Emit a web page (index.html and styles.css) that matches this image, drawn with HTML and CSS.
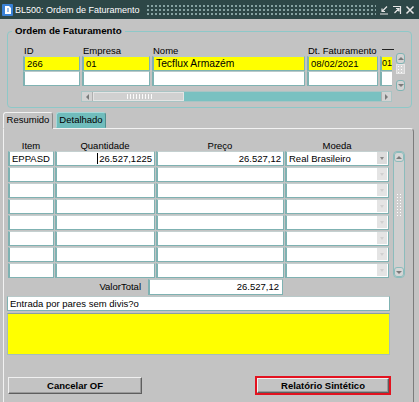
FILE: index.html
```html
<!DOCTYPE html>
<html>
<head>
<meta charset="utf-8">
<link rel="stylesheet" href="styles.css">
</head>
<body>
<div class="window">
  <div class="titlebar">
    <svg class="appicon" width="11" height="12" viewBox="0 0 11 12">
      <rect x="0" y="0" width="11" height="12" rx="1" fill="#3a82d6"/>
      <path d="M3 2 H7 L9 4 V10 H3 Z" fill="#fff"/>
      <path d="M5 5 H7 M5 7 H7" stroke="#3a82d6" stroke-width="1"/>
    </svg>
    <span class="title">BL500: Ordem de Faturamento</span>
    <span class="dots"></span>
    <span class="tb-btns">
      <svg width="10" height="10" viewBox="0 0 10 10"><path d="M8 1.5 L3 6.5 M3 3.5 V6.5 H6 M1 9 H9" stroke="#e6e6e6" stroke-width="1.2" fill="none"/></svg>
      <svg width="10" height="10" viewBox="0 0 10 10"><path d="M1 1.5 H8.5 V9 M2.5 8 L7 3.5 M4 3.5 H7 V6.5" stroke="#e6e6e6" stroke-width="1.2" fill="none"/></svg>
      <svg width="10" height="10" viewBox="0 0 10 10"><path d="M1.5 1.5 L8.5 8.5 M8.5 1.5 L1.5 8.5" stroke="#e6e6e6" stroke-width="1.5" fill="none"/></svg>
    </span>
  </div>
  <div class="body">
    <fieldset class="group">
      <legend>Ordem de Faturamento</legend>
      <div class="ofgrid">
        <div class="lbl">ID</div>
        <div class="lbl">Empresa</div>
        <div class="lbl">Nome</div>
        <div class="lbl">Dt. Faturamento</div>
        <div class="lbl"><span class="dash"></span></div>
        <div class="lbl"></div>

        <div class="fld yellow">266</div>
        <div class="fld yellow">01</div>
        <div class="fld yellow big">Tecflux Armazém</div>
        <div class="fld yellow">08/02/2021</div>
        <div class="fld yellow clip">01</div>
        <div class="vmini">
          <div class="sbtn up"><span class="tri-up"></span></div>
          <div class="sthumb"></div>
          <div class="sspace"></div>
          <div class="sbtn down"><span class="tri-down"></span></div>
        </div>

        <div class="fld"></div>
        <div class="fld"></div>
        <div class="fld"></div>
        <div class="fld"></div>
        <div class="fld clip"></div>

        <div class="hscroll">
          <div class="harrow"><span class="tri-left"></span></div>
          <div class="hthumb"><span class="grip-h"></span></div>
          <div class="htrack"></div>
          <div class="harrow right"><span class="tri-right"></span></div>
        </div>
      </div>
    </fieldset>

    <div class="tabs">
      <div class="tab active">Resumido</div>
      <div class="tab inactive">Detalhado</div>
    </div>

    <div class="panel">
      <div class="gridwrap">
        <div class="table">
          <div class="hdr">Item</div>
          <div class="hdr">Quantidade</div>
          <div class="hdr">Preço</div>
          <div class="hdr">Moeda</div>

          <div class="cell">EPPASD</div>
          <div class="cell num"><span class="caret">26.527,1225</span></div>
          <div class="cell num">26.527,12</div>
          <div class="cell combo"><span class="ctext">Real Brasileiro</span><span class="dd"><span class="tri-down"></span></span></div>

          <div class="cell"></div><div class="cell"></div><div class="cell"></div>
          <div class="cell combo"><span class="ctext"></span><span class="dd faded"><span class="tri-down"></span></span></div>
          <div class="cell"></div><div class="cell"></div><div class="cell"></div>
          <div class="cell combo"><span class="ctext"></span><span class="dd faded"><span class="tri-down"></span></span></div>
          <div class="cell"></div><div class="cell"></div><div class="cell"></div>
          <div class="cell combo"><span class="ctext"></span><span class="dd faded"><span class="tri-down"></span></span></div>
          <div class="cell"></div><div class="cell"></div><div class="cell"></div>
          <div class="cell combo"><span class="ctext"></span><span class="dd faded"><span class="tri-down"></span></span></div>
          <div class="cell"></div><div class="cell"></div><div class="cell"></div>
          <div class="cell combo"><span class="ctext"></span><span class="dd faded"><span class="tri-down"></span></span></div>
          <div class="cell"></div><div class="cell"></div><div class="cell"></div>
          <div class="cell combo"><span class="ctext"></span><span class="dd faded"><span class="tri-down"></span></span></div>
          <div class="cell"></div><div class="cell"></div><div class="cell"></div>
          <div class="cell combo"><span class="ctext"></span><span class="dd faded"><span class="tri-down"></span></span></div>
        </div>
        <div class="vscroll">
          <div class="vbtn"><span class="tri-up"></span></div>
          <div class="vtrack"><span class="grip-v"></span></div>
          <div class="vbtn"><span class="tri-down"></span></div>
        </div>
      </div>

      <div class="totalrow">
        <div class="tlabel">ValorTotal</div>
        <div class="fld num total">26.527,12</div>
      </div>

      <div class="fld wide">Entrada por pares sem divis?o</div>
      <div class="yellowbox"></div>

      <div class="buttons">
        <div class="btn">Cancelar OF</div>
        <div class="redframe"><div class="btn">Relatório Sintético</div></div>
      </div>
    </div>
  </div>
</div>
</body>
</html>
```

FILE: styles.css
```css
* { box-sizing: border-box; }
html, body { margin: 0; padding: 0; }
body {
  width: 419px;
  height: 402px;
  overflow: hidden;
  background: #c3c3c3;
  font-family: "Liberation Sans", Arial, sans-serif;
  font-size: 9.5px;
  color: #000;
}
.window {
  width: 419px;
  height: 402px;
  display: flex;
  flex-direction: column;
}
.titlebar {
  height: 19px;
  flex: none;
  background: #2d4747;
  display: flex;
  align-items: center;
  padding-left: 2px;
  color: #fff;
}
.appicon { flex: none; margin-right: 2px; }
.title { font-size: 9px; white-space: nowrap; }
.dots {
  flex: 1;
  height: 11px;
  margin: 0 3px 0 6px;
  background-image: radial-gradient(circle, #86a2a2 0.9px, transparent 1.2px);
  background-size: 4px 4px;
}
.tb-btns { display: flex; gap: 3px; padding-right: 4px; }

.body {
  flex: 1;
  display: flex;
  flex-direction: column;
  min-height: 0;
}

.group {
  margin: 6px 0 0 7px;
  width: 405px;
  padding: 6px 4px 5px 15px;
  border: 1px solid #8ec8c8;
  border-radius: 4px;
  min-width: 0;
}
.group legend {
  font-weight: bold;
  font-size: 9.7px;
  line-height: 12px;
  padding: 0 3px;
  margin-left: -11px;
}
.ofgrid {
  display: grid;
  grid-template-columns: 57px 68px 153px 71px 12px 11px;
  grid-template-rows: 13px 15px 15px auto;
  column-gap: 2px;
}
.lbl {
  align-self: end;
  padding-left: 1px;
  line-height: 11px;
  white-space: nowrap;
}
.dash {
  display: block;
  width: 12px;
  margin: 0 0 6px 1px;
  border-top: 1px solid #222;
}
.fld {
  background: #fff;
  border: 1px solid #7fb2b2;
  border-top-color: #b9c9c9;
  border-left-width: 2px;
  height: 15px;
  line-height: 13px;
  padding-left: 2px;
  white-space: nowrap;
  overflow: hidden;
}
.fld.big { font-size: 10.3px; }
.fld.yellow { background: #ffff00; }
.fld.clip { padding-left: 0; border-right: none; font-size: 9px; }
.num { text-align: right; padding-right: 3px; }

.vmini {
  grid-column: 6;
  grid-row: 2 / 4;
  margin: -3px 0 -5px 2px;
  display: flex;
  flex-direction: column;
}
.sbtn {
  height: 11px;
  border: 1px solid #7fb4b4;
  border-radius: 3px;
  background: #d3d3d3;
  display: flex;
  align-items: center;
  justify-content: center;
}
.sthumb {
  height: 10px;
  background: #d6d6d6;
  border: 1px solid #e6e6e6;
  background-image: radial-gradient(circle, #ffffff 0.8px, transparent 1px);
  background-size: 3px 3px;
}
.sspace { flex: 1; }

.tri-up, .tri-down, .tri-left, .tri-right { width: 0; height: 0; display: block; }
.tri-up { border-left: 3px solid transparent; border-right: 3px solid transparent; border-bottom: 3px solid #7a7a7a; }
.tri-down { border-left: 3px solid transparent; border-right: 3px solid transparent; border-top: 3px solid #7a7a7a; }
.tri-left { border-top: 3px solid transparent; border-bottom: 3px solid transparent; border-right: 3px solid #7a7a7a; }
.tri-right { border-top: 3px solid transparent; border-bottom: 3px solid transparent; border-left: 3px solid #7a7a7a; }

.hscroll {
  grid-column: 2 / 6;
  margin: 5px 0 0 -1px;
  height: 11px;
  display: flex;
  border: 1px solid #a9c4c4;
  background: #79c1c1;
}
.harrow {
  width: 11px;
  background: #d3d3d3;
  display: flex;
  align-items: center;
  justify-content: center;
  border-right: 1px solid #b0b0b0;
}
.harrow.right { width: 10px; border-right: none; border-left: 1px solid #b0b0b0; }
.hthumb {
  width: 91px;
  background: #d0d0d0;
  border: 1px solid #e4e4e4;
  display: flex;
  align-items: center;
  justify-content: center;
}
.grip-h {
  width: 26px;
  height: 5px;
  background-image: radial-gradient(circle, #ffffff 0.8px, transparent 1px);
  background-size: 3px 2.5px;
}
.htrack { flex: 1; }

.tabs {
  display: flex;
  gap: 3px;
  margin: 4px 0 0 3px;
  height: 16px;
  position: relative;
  z-index: 1;
}
.tab {
  width: 50px;
  text-align: center;
  line-height: 14px;
  border-radius: 3px 3px 0 0;
  border: 1px solid;
}
.tab.active {
  background: #c3c3c3;
  border-color: #f2f2f2 #8a8a8a transparent #f2f2f2;
  height: 17px;
}
.tab.inactive {
  background: #70bcbc;
  border-color: #a6d8d8 #4f8e8e #70bcbc #a6d8d8;
  height: 16px;
}

.panel {
  flex: 1;
  margin-left: 3px;
  width: 411px;
  border-top: 1px solid #f2f2f2;
  border-left: 1px solid #f2f2f2;
  border-right: 1px solid #7c7c7c;
  border-radius: 0 4px 0 0;
  padding: 12px 0 0 4px;
}
.gridwrap { display: flex; }
.table {
  display: grid;
  grid-template-columns: 46px 100px 128px 104px;
  grid-template-rows: 9px;
  grid-auto-rows: 15px;
  column-gap: 1px;
  row-gap: 1px;
}
.hdr {
  text-align: center;
  line-height: 9px;
  white-space: nowrap;
}
.cell {
  background: #fff;
  border: 1px solid #7fb2b2;
  border-top-color: #c4d0d0;
  border-left-width: 2px;
  line-height: 13px;
  padding-left: 2px;
  white-space: nowrap;
  overflow: hidden;
}
.cell.num { padding-right: 2px; }
.caret { border-left: 1px solid #000; padding-left: 1px; }
.cell.combo { display: flex; padding-right: 1px; }
.ctext { flex: 1; }
.dd {
  width: 10px;
  height: 12px;
  background: #dcdcdc;
  display: flex;
  align-items: center;
  justify-content: center;
}
.dd .tri-down { border-top-color: #888; border-left-width: 2.5px; border-right-width: 2.5px; }
.dd.faded { background: #e4e4e4; }
.dd.faded .tri-down { border-top-color: #d0d0d0; }

.vscroll {
  width: 12px;
  margin: 10px 0 0 4px;
  height: 127px;
  display: flex;
  flex-direction: column;
  border: 1px solid #8cbcbc;
  border-radius: 4px;
  background: #cfcfcf;
}
.vbtn {
  height: 10px;
  border: 1px solid #8cbcbc;
  border-radius: 3px;
  background: #d6d6d6;
  display: flex;
  align-items: center;
  justify-content: center;
}
.vtrack {
  flex: 1;
  display: flex;
  align-items: center;
  justify-content: center;
}
.grip-v {
  width: 6px;
  height: 24px;
  background-image: radial-gradient(circle, #ffffff 0.8px, transparent 1px);
  background-size: 3px 3px;
  margin-top: -20px;
}

.totalrow {
  display: flex;
  gap: 7px;
  margin-top: 1px;
}
.tlabel {
  width: 133px;
  text-align: right;
  line-height: 16px;
}
.fld.total { width: 135px; height: 16px; line-height: 14px; }
.fld.wide { width: 383px; margin: 1px 0 0 -1px; border-left-width: 1px; }
.yellowbox {
  width: 383px;
  height: 42px;
  margin: 2px 0 0 -1px;
  background: #ffff00;
  border: 1px solid #a5bcbc;
  border-top-color: #8aa0a0;
}

.buttons {
  display: flex;
  justify-content: space-between;
  align-items: center;
  width: 383px;
  margin-top: 21px;
}
.btn {
  background: #c3c3c3;
  border: 1px solid;
  border-color: #f0f0f0 #5e5e5e #5e5e5e #f0f0f0;
  box-shadow: inset -1px -1px 0 #9a9a9a;
  text-align: center;
  font-weight: bold;
  height: 17px;
  line-height: 15px;
  width: 134px;
}
.redframe {
  border: 2px solid #e3121f;
  width: 136px;
  height: 19px;
}
.redframe .btn { width: 100%; height: 100%; line-height: 13px; }
```
